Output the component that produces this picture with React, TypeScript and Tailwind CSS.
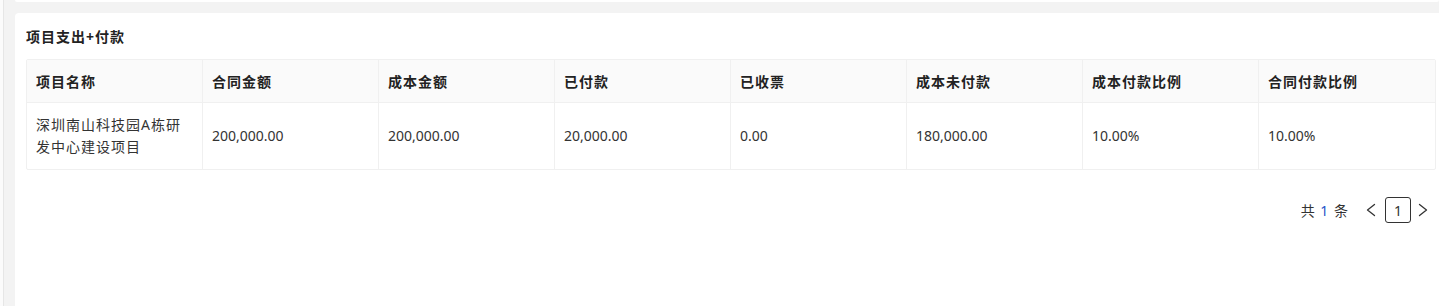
import React from 'react';

interface Row {
  name: string;
  contract: string;
  cost: string;
  paid: string;
  invoiced: string;
  costUnpaid: string;
  costRatio: string;
  contractRatio: string;
}

const columns: { key: keyof Row; title: string }[] = [
  { key: 'name', title: '项目名称' },
  { key: 'contract', title: '合同金额' },
  { key: 'cost', title: '成本金额' },
  { key: 'paid', title: '已付款' },
  { key: 'invoiced', title: '已收票' },
  { key: 'costUnpaid', title: '成本未付款' },
  { key: 'costRatio', title: '成本付款比例' },
  { key: 'contractRatio', title: '合同付款比例' },
];

const rows: Row[] = [
  {
    name: '深圳南山科技园A栋研发中心建设项目',
    contract: '200,000.00',
    cost: '200,000.00',
    paid: '20,000.00',
    invoiced: '0.00',
    costUnpaid: '180,000.00',
    costRatio: '10.00%',
    contractRatio: '10.00%',
  },
];

function Chevron({ dir }: { dir: 'left' | 'right' }) {
  return (
    <svg width="10" height="14" viewBox="0 0 10 14" fill="none" stroke="#333" strokeWidth="1.3" strokeLinecap="round" strokeLinejoin="round">
      {dir === 'left' ? <polyline points="8.5,1.5 1.5,7 8.5,12.5" /> : <polyline points="1.5,1.5 8.5,7 1.5,12.5" />}
    </svg>
  );
}

export default function App() {
  return (
    <div
      className="h-[306px] w-[1439px] flex bg-[#f3f3f3] overflow-hidden text-[14px] text-[#333]"
      style={{ fontFamily: '"Noto Sans", "Noto Sans CJK SC", sans-serif' }}
    >
      {/* left edge */}
      <div className="w-[4px] bg-[#fbfbfb] border-r border-[#e6e6e6] shrink-0" />

      <div className="flex-1 flex flex-col pl-[11px] min-w-0">
        {/* bottom of previous card */}
        <div className="h-[2px] bg-white rounded-b-[4px]" />

        {/* card */}
        <div className="mt-[11px] flex-1 bg-white rounded-tl-[4px] pl-[11px] pt-[13px]">
          <h3 className="font-bold text-[14px] leading-[22px] text-[#222] tracking-[1px]">项目支出+付款</h3>

          <div className="mt-[11px] w-[1410px] border border-[#f0f0f0] rounded-[2px]">
            <div className="grid grid-cols-8 bg-[#fafafa] border-b border-[#f0f0f0]">
              {columns.map((c, i) => (
                <div
                  key={c.key}
                  className={`h-[42px] flex items-center pl-[9px] pr-[10px] font-bold text-[#222] tracking-[1px] ${
                    i < columns.length - 1 ? 'border-r border-[#f0f0f0]' : ''
                  }`}
                >
                  {c.title}
                </div>
              ))}
            </div>
            {rows.map((r, ri) => (
              <div key={ri} className="grid grid-cols-8">
                {columns.map((c, i) => (
                  <div
                    key={c.key}
                    className={`h-[66px] flex items-center pl-[9px] pr-[10px] leading-[22px] ${
                      i < columns.length - 1 ? 'border-r border-[#f0f0f0]' : ''
                    } ${c.key === 'name' ? 'tracking-[1px]' : ''}`}
                  >
                    {r[c.key]}
                  </div>
                ))}
              </div>
            ))}
          </div>

          {/* pagination */}
          <div className="mt-[27px] w-[1410px] flex items-center justify-end pr-[8px]">
            <span className="tracking-[1px] text-[#333]">
              共 <span className="text-[#1f56c8]">1</span> 条
            </span>
            <button className="ml-[17px] h-[26px] flex items-center">
              <Chevron dir="left" />
            </button>
            <button className="ml-[9px] w-[26px] h-[26px] flex items-center justify-center border border-[#333] rounded-[3px] text-[#333]">
              1
            </button>
            <button className="ml-[7px] h-[26px] flex items-center">
              <Chevron dir="right" />
            </button>
          </div>
        </div>
      </div>
    </div>
  );
}
